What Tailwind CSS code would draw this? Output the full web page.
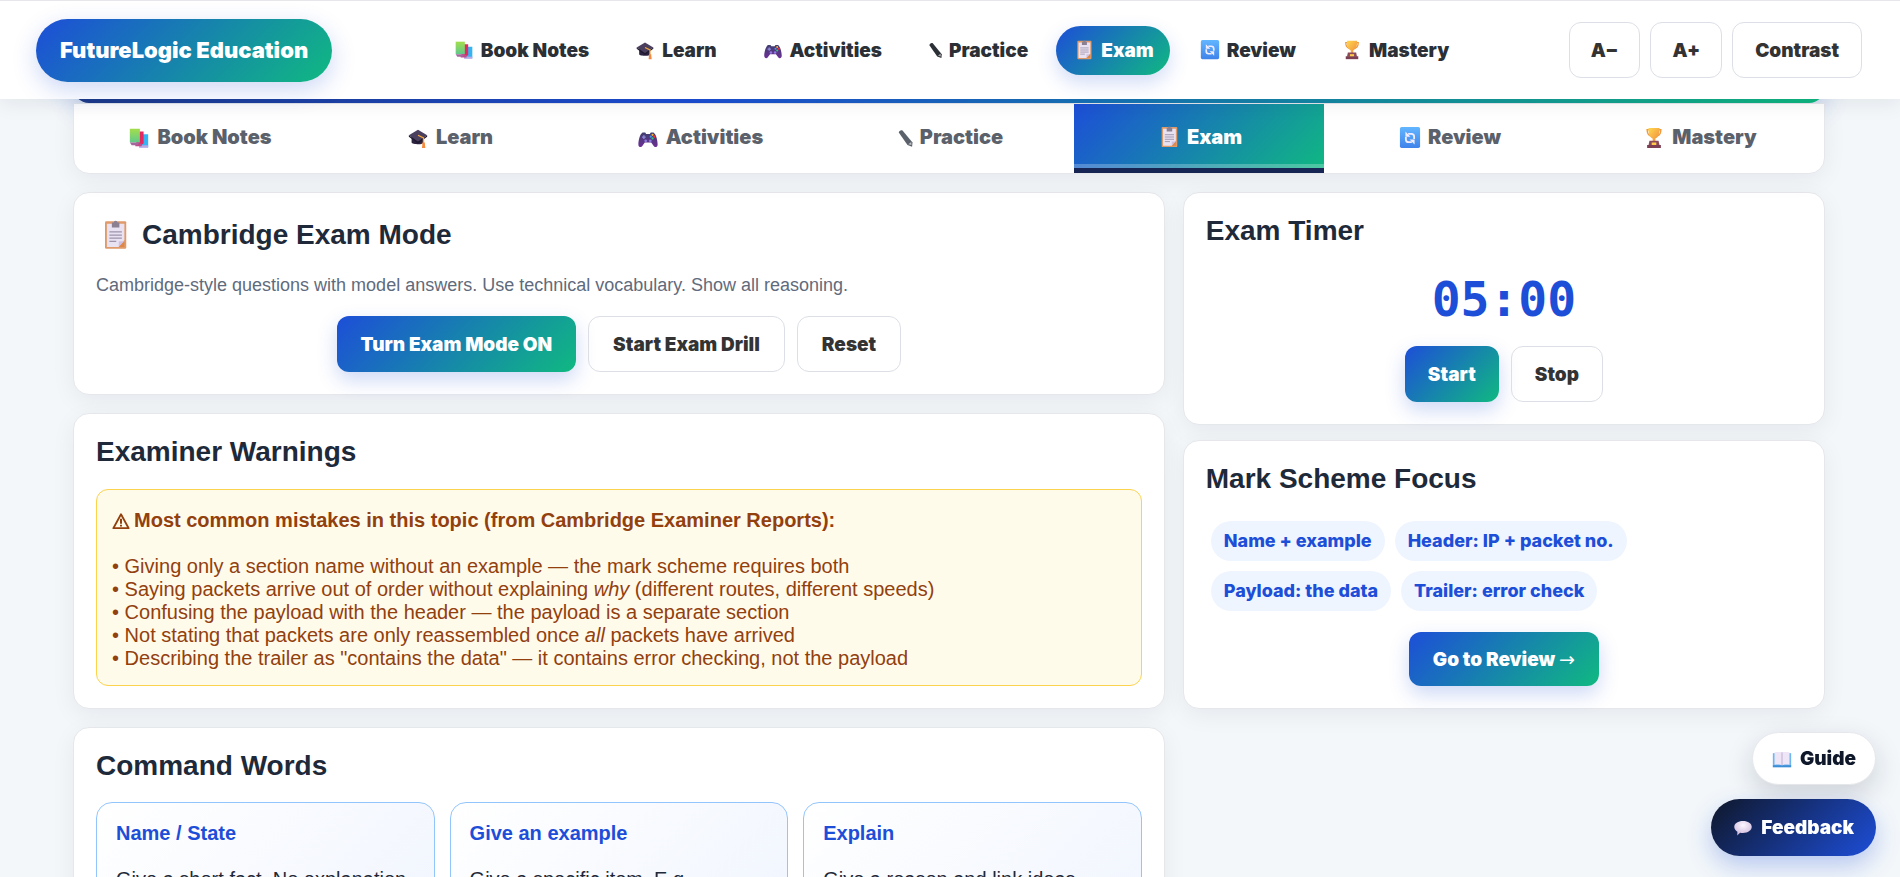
<!DOCTYPE html>
<html lang="en">
<head>
  <meta charset="UTF-8">
  <meta name="viewport" content="width=device-width, initial-scale=1.0">
  <title>FutureLogic Education - Exam</title>
  <script src="https://cdn.jsdelivr.net/npm/@tailwindcss/browser@4"></script>
</head>
<body class="h-screen overflow-hidden bg-[#f3f7fa] font-['Liberation_Sans',Arial,sans-serif] text-[20px] leading-[23px] text-gray-800">
  <!-- Icon set -->
  <svg class="absolute size-0" aria-hidden="true">
    <defs>
      <linearGradient id="g-green" x1="0" y1="0" x2="0" y2="1"><stop offset="0" stop-color="#a3de4b"/><stop offset="1" stop-color="#5fc98c"/></linearGradient>
      <linearGradient id="g-sky" x1="0" y1="0" x2="0" y2="1"><stop offset="0" stop-color="#62b6ff"/><stop offset="1" stop-color="#3f83ea"/></linearGradient>
      <linearGradient id="g-gold" x1="0" y1="0" x2="1" y2="1"><stop offset="0" stop-color="#ffd94f"/><stop offset="1" stop-color="#f08a3c"/></linearGradient>
      <linearGradient id="g-pad" x1="0" y1="0" x2="0" y2="1"><stop offset="0" stop-color="#3f3f6e"/><stop offset="1" stop-color="#6d2f96"/></linearGradient>
      <radialGradient id="g-speech" cx=".5" cy=".3" r=".7"><stop offset="0" stop-color="#fdf7ff"/><stop offset="1" stop-color="#cdb6dc"/></radialGradient>
    </defs>
    <symbol id="i-books" viewBox="0 0 24 24">
      <path d="M14 8h8v14h-9z" fill="#35b4f3"/><path d="M12 20h10v2.500H12z" fill="#b9a9e6"/>
      <path d="M9 5h8v13l-3 2H9z" fill="#e3295f"/><path d="M8 18h7v3H8z" fill="#c24a86"/>
      <path d="M2 2h11v15H2z" fill="url(#g-green)"/><path d="M2 17h11l-3 3H4z" fill="#a3669d"/>
    </symbol>
    <symbol id="i-cap" viewBox="0 0 24 24">
      <path d="M5 9v8c0 2 13 3 13 0V9z" fill="#2c2340"/><path d="M2 9 12 3l10 6-10 7z" fill="#4a3f5c"/>
      <path d="m2 9 10 7 10-7v1.500L12 18 2 10.500z" fill="#1f1930"/>
      <path d="m12 9 6 3v6" fill="none" stroke="#f5a742" stroke-width="1.500"/><path d="M16.800 17h2.600l.6 6h-3.600z" fill="#f58a3f"/>
    </symbol>
    <symbol id="i-game" viewBox="0 0 24 24">
      <path d="M6 6h3l1 1.500h4L15 6h3c3 2 4.500 9 4.500 13 0 3-3 4-4.500 1.500L15.500 17h-7L6 20.500C4.500 23 1.500 22 1.500 19 1.500 15 3 8 6 6z" fill="url(#g-pad)"/>
      <path d="M7.500 9v4M5.500 11h4" stroke="#8d8bd8" stroke-width="1.500"/><circle cx="9.500" cy="15" r="1.500" fill="#8d7be0"/><circle cx="14.500" cy="15" r="1.500" fill="#8d7be0"/>
      <circle cx="17" cy="8.500" r="1.200" fill="#ffb02e"/><circle cx="19" cy="10.500" r="1.200" fill="#f8312f"/><circle cx="15" cy="10.500" r="1.200" fill="#3f9bf5"/><circle cx="17" cy="12.500" r="1.200" fill="#35c481"/>
    </symbol>
    <symbol id="i-pencil" viewBox="0 0 18 24">
      <path d="M1.500 5.500c0-2 3-3.800 4.500-2.500l12 14.500-.5 5-5.500-2z" fill="currentColor"/>
      <path d="m13 19.500 3.500-2.800.3 3.800z" fill="#fff" fill-opacity=".6"/>
    </symbol>
    <symbol id="i-clip" viewBox="0 0 24 24">
      <rect x="4" y="1" width="17" height="22" rx="1" fill="#e09a6a"/><path d="M5.500 3h14v13l-4.500 5.500H5.500z" fill="#e9e2f2"/>
      <path d="M15 21.500V17h4.500z" fill="#cfc0e2"/><path d="M15 21.500 19.500 17v4.500z" fill="#dc8848"/>
      <path d="M9.500 2h1.500a1.500 1.500 0 0 1 3 0h1.500v4h-6z" fill="#8b8193"/>
      <path d="M7.500 9.500h10M7.500 12h10M7.500 14.500h10M7.500 17h5.500" stroke="#9d94ab" stroke-width="1"/>
    </symbol>
    <symbol id="i-sync" viewBox="0 0 24 24">
      <rect x="1" y="0" width="22" height="23" rx="2" fill="url(#g-sky)"/>
      <path d="M10 7.500h3.500a3 3 0 0 1 3 3V13M14 16.500h-3.500a3 3 0 0 1-3-3V11" fill="none" stroke="#f2ecff" stroke-width="2"/>
      <path d="M7 5v5.500h5.500zM17 19v-5.500h-5.500z" fill="#f2ecff"/>
    </symbol>
    <symbol id="i-cup" viewBox="0 0 24 24">
      <path d="M7 3H4.500c0 4 1 6 4 7M17 3h2.500c0 4-1 6-4 7" fill="none" stroke="#ef9a3d" stroke-width="1.500"/>
      <path d="M6 1h12c.5 6-1 10-4.500 11.500V16h-3v-3.500C7 11 5.500 7 6 1z" fill="url(#g-gold)"/>
      <path d="M7 15h10l1 5H6z" fill="#8a4a5a"/><path d="M4.500 19.500h15V23h-15z" fill="#7c3f52"/><path d="M9.500 17h5v2.500h-5z" fill="#ffc94a"/>
    </symbol>
    <symbol id="i-book" viewBox="0 0 24 24">
      <path d="M1 5h22v16H1z" fill="#6fb5ee"/><path d="M1 19.500h22V22H1z" fill="#3e8ed6"/>
      <path d="M3 4c3-.7 7-.7 9 0 2-.7 6-.7 9 0v15c-3-.6-7-.6-9 .5-2-1.100-6-1.100-9-.5z" fill="#eee6f6"/><path d="M12 4v15.500" stroke="#bfaed3" stroke-width="1.200"/>
    </symbol>
    <symbol id="i-speech" viewBox="0 0 24 24">
      <path d="M12 3.500c6 0 10.500 3 10.500 7S18 18 12 18c-1.200 0-2.400-.1-3.500-.4L5 21l.3-4.600C3 15 1.500 13 1.500 10.500c0-4 4.500-7 10.500-7z" fill="url(#g-speech)"/>
    </symbol>
    <symbol id="i-warn" viewBox="0 0 20 20">
      <path d="M10 2.500 18.500 18h-17z" fill="none" stroke="currentColor" stroke-width="2" stroke-linejoin="round"/><path d="M10 7.500v5.500M10 14.200v2" stroke="currentColor" stroke-width="2.200"/>
    </symbol>
  </svg>

  <!-- Top bar -->
  <header class="relative z-10 flex h-[99px] items-center justify-between border-t border-gray-200 bg-white pr-[38px] pl-9 font-['Inter',sans-serif] text-[19px] font-black whitespace-nowrap text-[#2b2f36] shadow-[0_4px_20px_rgba(15,23,42,0.08)]">
    <a href="#" class="flex h-[63px] items-center rounded-full bg-linear-135/srgb from-[#1d4ed8] to-[#10b981] px-6 text-[22px] text-white shadow-[0_8px_24px_rgba(29,78,216,0.22)]">FutureLogic Education</a>
    <nav class="flex items-center gap-3">
      <a href="#" class="flex h-[49px] items-center gap-[5px] rounded-full px-4"><svg class="size-6 p-[2px]"><use href="#i-books"/></svg>Book Notes</a>
      <a href="#" class="flex h-[49px] items-center gap-[5px] rounded-full px-4"><svg class="size-6 p-[2px]"><use href="#i-cap"/></svg>Learn</a>
      <a href="#" class="flex h-[49px] items-center gap-[5px] rounded-full px-4"><svg class="size-6 p-[2px]"><use href="#i-game"/></svg>Activities</a>
      <a href="#" class="flex h-[49px] items-center gap-[5px] rounded-full px-4"><svg class="h-[18px] w-[18px]"><use href="#i-pencil"/></svg>Practice</a>
      <a href="#" class="flex h-[49px] items-center gap-[5px] rounded-full bg-linear-135/srgb from-[#1d4ed8] to-[#10b981] px-4 text-white shadow-[0_8px_20px_rgba(29,78,216,0.2)]"><svg class="size-6 p-[2px]"><use href="#i-clip"/></svg>Exam</a>
      <a href="#" class="flex h-[49px] items-center gap-[5px] rounded-full px-4"><svg class="size-6 p-[2px]"><use href="#i-sync"/></svg>Review</a>
      <a href="#" class="flex h-[49px] items-center gap-[5px] rounded-full px-4"><svg class="size-6 p-[2px]"><use href="#i-cup"/></svg>Mastery</a>
    </nav>
    <div class="flex gap-[10px] text-[#333]">
      <button class="h-14 rounded-xl border border-[#dcdfe6] px-[21px]">A−</button>
      <button class="h-14 rounded-xl border border-[#dcdfe6] px-[21px]">A+</button>
      <button class="h-14 rounded-xl border border-[#dcdfe6] px-[22px]">Contrast</button>
    </div>
  </header>

  <main class="pr-[75px] pl-[73px]">
    <!-- Lower edge of the hero banner, under the top bar -->
    <div class="-mt-8 h-9 rounded-b-2xl bg-linear-to-r/srgb from-[#1e3a8a] via-[#1d4ed8] via-35% to-[#10b981] shadow-[0_8px_24px_rgba(29,78,216,0.22)]"></div>

    <!-- Section tabs -->
    <nav class="relative grid h-[71px] grid-cols-7 overflow-hidden rounded-b-2xl border border-gray-200 bg-white font-['Inter',sans-serif] text-[20px] font-black text-[#5b616b] shadow-[0_6px_24px_rgba(15,23,42,0.06)]">
      <a href="#" class="flex items-center justify-center gap-[5px] pb-[2px]"><svg class="size-[26px] p-[2px]"><use href="#i-books"/></svg>Book Notes</a>
      <a href="#" class="flex items-center justify-center gap-[5px] pb-[2px]"><svg class="size-[26px] p-[2px]"><use href="#i-cap"/></svg>Learn</a>
      <a href="#" class="flex items-center justify-center gap-[5px] pb-[2px]"><svg class="size-[26px] p-[2px]"><use href="#i-game"/></svg>Activities</a>
      <a href="#" class="flex items-center justify-center gap-[5px] pb-[2px]"><svg class="size-5"><use href="#i-pencil"/></svg>Practice</a>
      <a href="#" class="flex flex-col bg-linear-135/srgb from-[#1d4ed8] to-[#10b981] text-white">
        <span class="flex flex-1 items-center justify-center gap-[5px] pt-[6px]"><svg class="size-[26px] p-[2px]"><use href="#i-clip"/></svg>Exam</span>
        <span class="h-1 bg-white/25"></span>
        <span class="h-[5px] bg-[#172554]"></span>
      </a>
      <a href="#" class="flex items-center justify-center gap-[5px] pb-[2px]"><svg class="size-[26px] p-[2px]"><use href="#i-sync"/></svg>Review</a>
      <a href="#" class="flex items-center justify-center gap-[5px] pb-[2px]"><svg class="size-[26px] p-[2px]"><use href="#i-cup"/></svg>Mastery</a>
    </nav>

    <div class="mt-[18px] grid grid-cols-[1.7fr_1fr] items-start gap-[18px]">
      <!-- Left column -->
      <div class="flex min-w-0 flex-col gap-[18px]">
        <section class="rounded-2xl border border-gray-200 bg-white p-[22px] shadow-[0_6px_24px_rgba(15,23,42,0.06)]">
          <h1 class="flex items-center gap-3 pl-1 text-[28px] leading-10 font-bold"><svg class="size-[30px]"><use href="#i-clip"/></svg>Cambridge Exam Mode</h1>
          <p class="mt-5 text-[18px] leading-5 text-[#5f6b7c]">Cambridge-style questions with model answers. Use technical vocabulary. Show all reasoning.</p>
          <div class="mt-[21px] flex justify-center gap-3 font-['Inter',sans-serif] text-[19px] font-black text-[#333]">
            <button class="h-14 rounded-xl bg-linear-135/srgb from-[#1d4ed8] to-[#10b981] px-6 text-white shadow-[0_8px_20px_rgba(29,78,216,0.22)]">Turn Exam Mode ON</button>
            <button class="h-14 rounded-xl border border-[#dcdfe6] px-6">Start Exam Drill</button>
            <button class="h-14 rounded-xl border border-[#dcdfe6] px-6">Reset</button>
          </div>
        </section>

        <section class="rounded-2xl border border-gray-200 bg-white p-[22px] shadow-[0_6px_24px_rgba(15,23,42,0.06)]">
          <h2 class="text-[28px] leading-8 font-bold">Examiner Warnings</h2>
          <div class="mt-[21px] rounded-xl border border-[#fcd34d] bg-[#fffbeb] px-[15px] pt-[19px] pb-[15px] text-[#92400e]">
            <p class="flex items-center gap-1 font-bold"><svg class="size-[18px]"><use href="#i-warn"/></svg>Most common mistakes in this topic (from Cambridge Examiner Reports):</p>
            <p class="mt-[23px]">
              • Giving only a section name without an example — the mark scheme requires both<br>
              • Saying packets arrive out of order without explaining <em>why</em> (different routes, different speeds)<br>
              • Confusing the payload with the header — the payload is a separate section<br>
              • Not stating that packets are only reassembled once <em>all</em> packets have arrived<br>
              • Describing the trailer as "contains the data" — it contains error checking, not the payload
            </p>
          </div>
        </section>

        <section class="rounded-2xl border border-gray-200 bg-white p-[22px] shadow-[0_6px_24px_rgba(15,23,42,0.06)]">
          <h2 class="text-[28px] leading-8 font-bold">Command Words</h2>
          <div class="mt-5 grid grid-cols-3 gap-[15px]">
            <article class="h-44 rounded-2xl border border-[#93c5fd] bg-linear-135/srgb from-white to-[#eff4fe] px-[19px] pt-[19px]">
              <h3 class="font-bold text-[#1d4ed8]">Name / State</h3>
              <p class="mt-[23px]">Give a short fact. No explanation</p>
            </article>
            <article class="h-44 rounded-2xl border border-[#93c5fd] bg-linear-135/srgb from-white to-[#eff4fe] px-[19px] pt-[19px]">
              <h3 class="font-bold text-[#1d4ed8]">Give an example</h3>
              <p class="mt-[23px]">Give a specific item. E.g.</p>
            </article>
            <article class="h-44 rounded-2xl border border-[#93c5fd] bg-linear-135/srgb from-white to-[#eff4fe] px-[19px] pt-[19px]">
              <h3 class="font-bold text-[#1d4ed8]">Explain</h3>
              <p class="mt-[23px]">Give a reason and link ideas</p>
            </article>
          </div>
        </section>
      </div>

      <!-- Right column -->
      <aside class="flex min-w-0 flex-col gap-[15px]">
        <section class="rounded-2xl border border-gray-200 bg-white p-[22px] shadow-[0_6px_24px_rgba(15,23,42,0.06)]">
          <h2 class="text-[28px] leading-8 font-bold">Exam Timer</h2>
          <div class="mt-6 text-center font-['DejaVu_Sans_Mono',monospace] text-[48px] leading-[56px] font-bold text-[#1d4ed8]">05:00</div>
          <div class="mt-[19px] flex justify-center gap-3 font-['Inter',sans-serif] text-[19px] font-black text-[#333]">
            <button class="h-14 rounded-xl bg-linear-135/srgb from-[#1d4ed8] to-[#10b981] px-[23px] text-white shadow-[0_8px_20px_rgba(29,78,216,0.22)]">Start</button>
            <button class="h-14 rounded-xl border border-[#dcdfe6] px-[23px]">Stop</button>
          </div>
        </section>

        <section class="rounded-2xl border border-gray-200 bg-white p-[22px] shadow-[0_6px_24px_rgba(15,23,42,0.06)]">
          <h2 class="text-[28px] leading-8 font-bold">Mark Scheme Focus</h2>
          <div class="mt-[26px] flex max-w-[460px] flex-wrap gap-[10px] pl-[5px] font-['Inter',sans-serif] text-[18px] leading-10 font-extrabold text-[#1d4ed8]">
            <span class="rounded-full bg-[#eff5ff] px-[13px]">Name + example</span>
            <span class="rounded-full bg-[#eff5ff] px-[13px]">Header: IP + packet no.</span>
            <span class="rounded-full bg-[#eff5ff] px-[13px]">Payload: the data</span>
            <span class="rounded-full bg-[#eff5ff] px-[13px]">Trailer: error check</span>
          </div>
          <div class="mt-[21px] flex justify-center font-['Inter',sans-serif] text-[19px] font-black">
            <button class="h-[54px] rounded-xl bg-linear-135/srgb from-[#1d4ed8] to-[#10b981] px-6 text-white shadow-[0_8px_20px_rgba(29,78,216,0.22)]">Go to Review <span class="font-['DejaVu_Sans',sans-serif] font-normal">→</span></button>
          </div>
        </section>
      </aside>
    </div>
  </main>

  <!-- Floating help -->
  <div class="fixed right-6 bottom-[21px] z-20 flex flex-col items-end gap-[14px] font-['Inter',sans-serif] text-[19px] font-black">
    <button class="flex h-[53px] items-center gap-2 rounded-full border border-gray-200 bg-white px-[19px] text-[#0f172a] shadow-[0_10px_28px_rgba(15,23,42,0.16)]"><svg class="size-5"><use href="#i-book"/></svg>Guide</button>
    <button class="flex h-[57px] items-center gap-2 rounded-full bg-linear-135/srgb from-[#0f172a] to-[#1d4ed8] px-[22px] text-white shadow-[0_10px_24px_rgba(29,78,216,0.28)]"><svg class="size-5"><use href="#i-speech"/></svg>Feedback</button>
  </div>
</body>
</html>
